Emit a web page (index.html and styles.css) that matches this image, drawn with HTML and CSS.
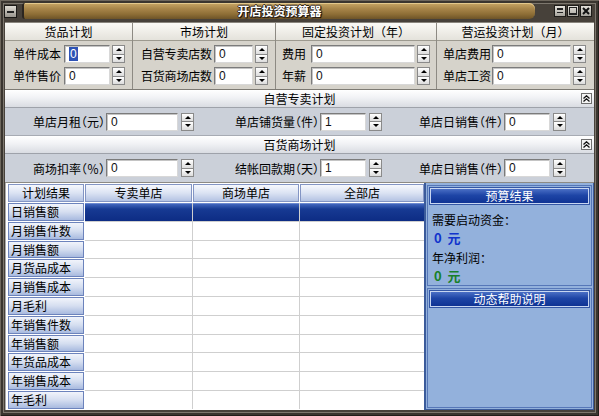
FILE: index.html
```html
<!DOCTYPE html>
<html lang="zh-CN">
<head>
<meta charset="utf-8">
<title>开店投资预算器</title>
<link rel="stylesheet" href="styles.css">
</head>
<body>
<div class="window">
  <div class="titlebar">
    <div class="sysicon"><span class="dash"></span></div>
    <div class="titleband"><span class="title">开店投资预算器</span></div>
    <div class="ctrls">
      <span class="cbtn"><svg width="10" height="10" viewBox="0 0 10 10"><rect x="2" y="2" width="6" height="2" fill="#222"/><rect x="2" y="6" width="6" height="1" fill="#222"/></svg></span>
      <span class="cbtn"><svg width="10" height="10" viewBox="0 0 10 10"><rect x="1.5" y="1.5" width="7" height="7" fill="none" stroke="#222"/><rect x="1" y="7" width="8" height="2" fill="#222"/></svg></span>
      <span class="cbtn"><svg width="10" height="10" viewBox="0 0 10 10"><path d="M2 2 L8 8 M8 2 L2 8" stroke="#111" stroke-width="2"/></svg></span>
    </div>
  </div>
  <div class="client">
    <div class="groups">
      <div class="group g1">
        <div class="ghead">货品计划</div>
        <div class="gbody">
          <div class="frow"><span class="lbl">单件成本</span><span class="input"><span class="sel">0</span></span><span class="spin"><span class="up"></span><span class="dn"></span></span></div>
          <div class="frow"><span class="lbl">单件售价</span><span class="input">0</span><span class="spin"><span class="up"></span><span class="dn"></span></span></div>
        </div>
      </div>
      <div class="group g2">
        <div class="ghead">市场计划</div>
        <div class="gbody">
          <div class="frow"><span class="lbl">自营专卖店数</span><span class="input">0</span><span class="spin"><span class="up"></span><span class="dn"></span></span></div>
          <div class="frow"><span class="lbl">百货商场店数</span><span class="input">0</span><span class="spin"><span class="up"></span><span class="dn"></span></span></div>
        </div>
      </div>
      <div class="group g3">
        <div class="ghead">固定投资计划（年）</div>
        <div class="gbody">
          <div class="frow"><span class="lbl">费用</span><span class="input">0</span><span class="spin"><span class="up"></span><span class="dn"></span></span></div>
          <div class="frow"><span class="lbl">年薪</span><span class="input">0</span><span class="spin"><span class="up"></span><span class="dn"></span></span></div>
        </div>
      </div>
      <div class="group g4">
        <div class="ghead">营运投资计划（月）</div>
        <div class="gbody">
          <div class="frow"><span class="lbl">单店费用</span><span class="input">0</span><span class="spin"><span class="up"></span><span class="dn"></span></span></div>
          <div class="frow"><span class="lbl">单店工资</span><span class="input">0</span><span class="spin"><span class="up"></span><span class="dn"></span></span></div>
        </div>
      </div>
    </div>

    <div class="shead">自营专卖计划<span class="fold"><svg width="7" height="7" viewBox="0 0 7 7"><path d="M0.5 3.5 L3.5 0.8 L6.5 3.5 M0.5 6.5 L3.5 3.8 L6.5 6.5" fill="none" stroke="#111" stroke-width="1.3"/></svg></span></div>
    <div class="prow">
      <div class="pitem i1"><span class="plbl">单店月租（元）</span><span class="input">0</span><span class="spin"><span class="up"></span><span class="dn"></span></span></div>
      <div class="pitem i2"><span class="plbl">单店铺货量（件）</span><span class="input">1</span><span class="spin"><span class="up"></span><span class="dn"></span></span></div>
      <div class="pitem i3"><span class="plbl">单店日销售（件）</span><span class="input">0</span><span class="spin"><span class="up"></span><span class="dn"></span></span></div>
    </div>

    <div class="shead">百货商场计划<span class="fold"><svg width="7" height="7" viewBox="0 0 7 7"><path d="M0.5 3.5 L3.5 0.8 L6.5 3.5 M0.5 6.5 L3.5 3.8 L6.5 6.5" fill="none" stroke="#111" stroke-width="1.3"/></svg></span></div>
    <div class="prow short">
      <div class="pitem i1"><span class="plbl">商场扣率（％）</span><span class="input">0</span><span class="spin"><span class="up"></span><span class="dn"></span></span></div>
      <div class="pitem i2"><span class="plbl">结帐回款期（天）</span><span class="input">1</span><span class="spin"><span class="up"></span><span class="dn"></span></span></div>
      <div class="pitem i3"><span class="plbl">单店日销售（件）</span><span class="input">0</span><span class="spin"><span class="up"></span><span class="dn"></span></span></div>
    </div>

    <div class="bottom">
      <div class="tablewrap">
        <div class="grid">
          <div class="th first">计划结果</div>
          <div class="th">专卖单店</div>
          <div class="th">商场单店</div>
          <div class="th">全部店</div>

          <div class="rh">日销售额</div><div class="td selrow"></div><div class="td selrow"></div><div class="td selrow"></div>
          <div class="rh">月销售件数</div><div class="td"></div><div class="td"></div><div class="td"></div>
          <div class="rh">月销售额</div><div class="td"></div><div class="td"></div><div class="td"></div>
          <div class="rh">月货品成本</div><div class="td"></div><div class="td"></div><div class="td"></div>
          <div class="rh">月销售成本</div><div class="td"></div><div class="td"></div><div class="td"></div>
          <div class="rh">月毛利</div><div class="td"></div><div class="td"></div><div class="td"></div>
          <div class="rh">年销售件数</div><div class="td"></div><div class="td"></div><div class="td"></div>
          <div class="rh">年销售额</div><div class="td"></div><div class="td"></div><div class="td"></div>
          <div class="rh">年货品成本</div><div class="td"></div><div class="td"></div><div class="td"></div>
          <div class="rh">年销售成本</div><div class="td"></div><div class="td"></div><div class="td"></div>
          <div class="rh">年毛利</div><div class="td"></div><div class="td"></div><div class="td"></div>
        </div>
      </div>
      <div class="side">
        <div class="panel result">
          <div class="phead">预算结果</div>
          <div class="pbody">
            <div class="ptext">需要启动资金：</div>
            <div class="pval blue">0&nbsp;&nbsp;元</div>
            <div class="ptext">年净利润：</div>
            <div class="pval green">0&nbsp;&nbsp;元</div>
          </div>
        </div>
        <div class="panel help">
          <div class="phead">动态帮助说明</div>
          <div class="pbody helpbody"></div>
        </div>
      </div>
    </div>
  </div>
</div>
</body>
</html>
```

FILE: styles.css
```css
* { box-sizing: border-box; }
html, body { margin: 0; padding: 0; }
body {
  width: 599px;
  height: 416px;
  overflow: hidden;
  background: #3e3933;
  font-family: "Noto Sans CJK SC", "Noto Sans", sans-serif;
  font-size: 12px;
  color: #000;
}
.window {
  width: 599px;
  height: 416px;
  background: #47413a;
  box-shadow: inset 1px 1px 0 #6e675d, inset -1px -1px 0 #221e1a, inset 3px 3px 0 #3a352f, inset -3px -3px 0 #3a352f, inset 4px 4px 0 #7d776e, inset -4px -4px 0 #7d776e;
  display: flex;
  flex-direction: column;
}

/* Title bar */
.titlebar {
  height: 22px;
  display: flex;
  align-items: flex-start;
  padding: 3px 7px 0 4px;
  flex: none;
}
.sysicon {
  width: 13px;
  height: 13px;
  margin-top: 2px;
  background: linear-gradient(#dedad2, #9a968e);
  border: 1px solid #1c1a17;
  display: flex;
  align-items: center;
  justify-content: center;
}
.sysicon .dash { width: 7px; height: 2px; background: #222; }
.titleband {
  margin-left: 5px;
  width: 513px;
  height: 16px;
  border-radius: 3px 6px 6px 3px;
  border-left: 2px solid #2c2620;
  background: linear-gradient(#c9a766 0%, #a8864a 35%, #8e6e36 70%, #6d5428 100%);
  box-shadow: inset 0 1px 0 #e3c98d;
  display: flex;
  align-items: center;
  justify-content: center;
}
.title {
  color: #fff;
  font-weight: bold;
  font-size: 12px;
  line-height: 16px;
  text-shadow: 1px 0 0 #2a2118, -1px 0 0 #2a2118, 0 1px 0 #2a2118, 0 -1px 0 #2a2118, 1px 1px 1px #000;
}
.ctrls {
  margin-left: auto;
  margin-top: 2px;
  display: flex;
  gap: 1px;
}
.cbtn {
  width: 12px;
  height: 12px;
  border: 1px solid #1e1c19;
  background: linear-gradient(#e4e1da, #a8a59e);
  display: flex;
  align-items: center;
  justify-content: center;
}

/* Client */
.client {
  margin: 0 5px;
  width: 589px;
  height: 388px;
  background: #d6d3cb;
  display: flex;
  flex-direction: column;
  border-top: 1px solid #8a867e;
}

/* Groups */
.groups {
  display: flex;
  height: 67px;
  border-bottom: 1px solid #7d7a73;
  flex: none;
}
.group {
  border-right: 1px solid #8d8a83;
  display: flex;
  flex-direction: column;
}
.group:last-child { border-right: none; }
.g1 { width: 128px; }
.g2 { width: 143px; }
.g3 { width: 161px; }
.g4 { width: 157px; }
.ghead {
  height: 18px;
  line-height: 17px;
  text-align: center;
  background: linear-gradient(#fbfaf6, #e4e2db);
  border-bottom: 1px solid #9c998f;
}
.gbody {
  flex: 1;
  display: flex;
  flex-direction: column;
  gap: 4px;
  padding-top: 4px;
  background: #d6d3cb;
}
.frow {
  display: flex;
  align-items: center;
  gap: 2px;
  height: 18px;
}
.lbl { white-space: nowrap; line-height: 18px; }
.g1 .gbody { padding-left: 8px; }
.g1 .lbl { width: 49px; }
.g1 .input { width: 46px; }
.g2 .gbody { padding-left: 8px; }
.g2 .lbl { width: 71px; letter-spacing: -0.2px; }
.g2 .input { width: 39px; }
.g3 .gbody { padding-left: 6px; }
.g3 .lbl { width: 27px; }
.g3 .input { width: 104px; }
.g4 .gbody { padding-left: 6px; }
.g4 .lbl { width: 47px; }
.g4 .input { width: 79px; }

/* Inputs & spinners */
.input {
  height: 18px;
  background: #fff;
  border-top: 1px solid #7b7b7b;
  border-left: 1px solid #7b7b7b;
  border-right: 1px solid #d8d8d8;
  border-bottom: 1px solid #d8d8d8;
  box-shadow: inset 1px 1px 0 #c4c4c4;
  padding-left: 4px;
  font-family: "Liberation Sans", Arial, sans-serif;
  font-size: 12px;
  line-height: 16px;
  color: #111;
  flex: none;
}
.sel {
  background: #2d52b5;
  color: #fff;
  padding: 0 1px;
}
.spin {
  width: 13px;
  height: 18px;
  display: flex;
  flex-direction: column;
  flex: none;
}
.spin .up, .spin .dn {
  flex: 1;
  background: linear-gradient(#ffffff, #dcdcdc);
  border: 1px solid #8a8a8a;
  display: flex;
  align-items: center;
  justify-content: center;
}
.spin .dn { border-top: none; }
.spin .up::before {
  content: "";
  border-left: 3px solid transparent;
  border-right: 3px solid transparent;
  border-bottom: 3px solid #000;
}
.spin .dn::before {
  content: "";
  border-left: 3px solid transparent;
  border-right: 3px solid transparent;
  border-top: 3px solid #000;
}

/* Section headers */
.shead {
  height: 18px;
  line-height: 17px;
  text-align: center;
  background: linear-gradient(#ffffff, #f1f2f5 45%, #d9dce2);
  border-bottom: 1px solid #9ea2aa;
  position: relative;
  flex: none;
}
.fold {
  position: absolute;
  right: 2px;
  top: 3px;
  width: 11px;
  height: 11px;
  background: #f4f4f4;
  border: 1px solid #6f6f6f;
  display: flex;
  align-items: center;
  justify-content: center;
}
.prow {
  height: 28px;
  background: #cbd0d9;
  border-bottom: 1px solid #a7abb3;
  display: flex;
  align-items: center;
  flex: none;
}
.prow.short { border-bottom: none; }
.pitem {
  display: flex;
  align-items: center;
}
.plbl {
  text-align: right;
  white-space: nowrap;
  padding-right: 1px;
  font-feature-settings: "halt" 1;
}
.pitem .spin { margin-left: 3px; }
.i1 .plbl { width: 101px; }
.i1 .input { width: 72px; }
.i2 .plbl { width: 126px; }
.i2 .input { width: 46px; }
.i3 .plbl { width: 122px; }
.i3 .input { width: 46px; }

/* Bottom area */
.bottom {
  flex: 1;
  display: flex;
  border-top: 1px solid #8c8a84;
}
.tablewrap {
  width: 419px;
  background: #ffffff;
  padding: 1px 0 0 2px;
  border-left: 1px solid #aaa;
}
.grid {
  display: grid;
  grid-template-columns: 76px 107px 106px 124px;
  grid-template-rows: 18px;
  grid-auto-rows: 17.8px;
  column-gap: 1px;
  row-gap: 1px;
  background: #cfcfcf;
  width: 416px;
}
.th {
  background: linear-gradient(#f6f8fd, #dbe3f3 50%, #b4c3e3);
  border: 1px solid #8395c4;
  text-align: center;
  line-height: 16px;
  outline: 1px solid #fff;
}
.rh {
  background: linear-gradient(#f1f4fb, #d5def0 50%, #a8badf);
  border: 1px solid #6c83bc;
  padding-left: 2px;
  line-height: 16px;
  white-space: nowrap;
  outline: 1px solid #fff;
}
.td { background: #fff; }
.td.selrow {
  background: linear-gradient(#4166bd, #173a93 30%, #0d2c84);
  border-top: 1px solid #6d8ad0;
}

/* Right side */
.side {
  flex: 1;
  background: #93b1dc;
  border-left: 2px solid #3b5b9b;
  border-right: 1px solid #3b5b9b;
  border-bottom: 1px solid #3b5b9b;
  display: flex;
  flex-direction: column;
  padding: 2px 1px 1px 1px;
  gap: 2px;
}
.panel {
  border: 1px solid #5677b8;
  padding: 2px 2px 0 2px;
  display: flex;
  flex-direction: column;
}
.result { height: 101px; }
.help { flex: 1; }
.phead {
  height: 16px;
  line-height: 14px;
  text-align: center;
  color: #fff;
  background: linear-gradient(#4a6fc5, #1e45a6 45%, #0f3394);
  border: 1px solid #c7d6f1;
  outline: 1px solid #3457a6;
}
.pbody {
  padding: 7px 0 0 2px;
}
.ptext { line-height: 17px; height: 17px; }
.pval {
  font-weight: bold;
  font-size: 13px;
  line-height: 19px;
  height: 21px;
  padding-left: 2px;
}
.blue { color: #1133cc; }
.green { color: #18802a; }
.helpbody { flex: 1; }
```
